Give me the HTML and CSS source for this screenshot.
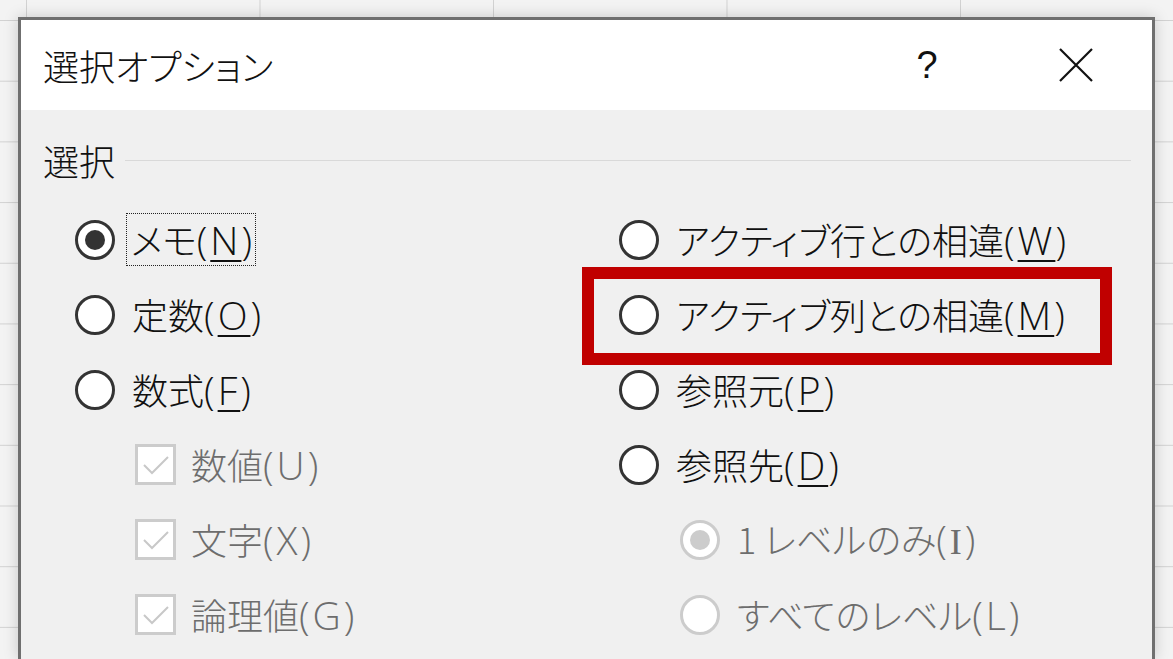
FILE: index.html
```html
<!DOCTYPE html>
<html lang="ja">
<head>
    <meta charset="UTF-8">
    <meta name="viewport" content="width=device-width, initial-scale=1.0">
    <title>選択オプション</title>
    <link rel="stylesheet" href="styles.css">
</head>
<body>

    <div id="dialogo">
        <div class="titulo">
            <span class="titulo-texto">選択オプション</span>
            <span class="btn-ajuda">?</span>
            <span class="btn-fechar">
                <svg width="34" height="34" viewBox="0 0 34 34">
                    <path d="M1 1 L33 33 M33 1 L1 33" stroke="#111" stroke-width="2.2" fill="none"/>
                </svg>
            </span>
        </div>

        <div class="corpo">
            <div class="grupo">
                <span class="grupo-nome">選択</span>
                <span class="grupo-linha"></span>
            </div>

            <div class="opcoes">
                <div class="coluna">
                    <div class="item"><span class="radio marcado"></span><span class="rotulo foco">メモ<span class="lat">(<u>N</u>)</span></span></div>
                    <div class="item"><span class="radio"></span><span class="rotulo">定数<span class="lat">(<u>O</u>)</span></span></div>
                    <div class="item"><span class="radio"></span><span class="rotulo">数式<span class="lat">(<u>F</u>)</span></span></div>
                    <div class="item sub-check"><span class="check"><svg width="28" height="22" viewBox="0 0 28 22"><path d="M2 11 L10 19 L26 3" stroke="#c8c8c8" stroke-width="2" fill="none"/></svg></span><span class="rotulo apagado">数値<span class="lat">(U)</span></span></div>
                    <div class="item sub-check"><span class="check"><svg width="28" height="22" viewBox="0 0 28 22"><path d="M2 11 L10 19 L26 3" stroke="#c8c8c8" stroke-width="2" fill="none"/></svg></span><span class="rotulo apagado">文字<span class="lat">(X)</span></span></div>
                    <div class="item sub-check"><span class="check"><svg width="28" height="22" viewBox="0 0 28 22"><path d="M2 11 L10 19 L26 3" stroke="#c8c8c8" stroke-width="2" fill="none"/></svg></span><span class="rotulo apagado">論理値<span class="lat">(G)</span></span></div>
                </div>

                <div class="coluna">
                    <div class="item"><span class="radio"></span><span class="rotulo">アクティブ行との相違<span class="lat">(<u>W</u>)</span></span></div>
                    <div class="item destaque"><span class="radio"></span><span class="rotulo">アクティブ列との相違<span class="lat">(<u>M</u>)</span></span></div>
                    <div class="item"><span class="radio"></span><span class="rotulo">参照元<span class="lat">(<u>P</u>)</span></span></div>
                    <div class="item"><span class="radio"></span><span class="rotulo">参照先<span class="lat">(<u>D</u>)</span></span></div>
                    <div class="item sub-radio"><span class="radio desativado marcado"></span><span class="rotulo apagado">1 レベルのみ<span class="lat">(<span class="serifa">I</span>)</span></span></div>
                    <div class="item sub-radio"><span class="radio desativado"></span><span class="rotulo apagado">すべてのレベル<span class="lat">(L)</span></span></div>
                </div>
            </div>
        </div>
    </div>

</body>
</html>
```

FILE: styles.css
```css
/* fundo: planilha do Excel */
body {
    margin: 0;
    padding: 0;
    height: 659px;
    overflow: hidden;
    font-family: "Noto Sans CJK JP", "Noto Sans", sans-serif;
    font-weight: 300;
    font-feature-settings: "palt";
    background-color: #f3f3f3;
    background-image:
        linear-gradient(to right, #d2d2d2 1px, transparent 1px),
        linear-gradient(to bottom, #d2d2d2 1px, transparent 1px);
    background-size: 233.5px 60.7px;
    background-position: 26px 20px;
}

#dialogo {
    position: absolute;
    left: 18px;
    top: 17px;
    width: 1131px;
    height: 639px;
    border: 3px solid #6f6f6f;
    border-bottom: none;
    background-color: #f0f0f0;
    box-shadow: 0 0 14px rgba(0, 0, 0, 0.18);
}

.titulo {
    display: flex;
    align-items: center;
    height: 90px;
    background-color: white;
    padding-left: 22px;
    color: #111;
}

.titulo-texto {
    flex: 1;
    font-size: 36px;
    line-height: 1;
}

.btn-ajuda {
    width: 100px;
    text-align: center;
    font-family: "Liberation Sans", sans-serif;
    font-size: 38px;
    line-height: 1;
}

.btn-fechar {
    width: 100px;
    margin-left: 49px;
    margin-right: 26px;
    display: flex;
    justify-content: center;
}

.corpo {
    padding: 30px 21px 0 22px;
}

.grupo {
    display: flex;
    align-items: center;
    height: 40px;
}

.grupo-nome {
    font-size: 36px;
    line-height: 1;
    color: #111;
    margin-right: 10px;
}

.grupo-linha {
    flex: 1;
    height: 1px;
    background-color: #d9d9d9;
}

.opcoes {
    display: flex;
    margin-top: 22px;
    padding-left: 32px;
}

.coluna {
    display: flex;
    flex-direction: column;
}

.coluna:first-child {
    width: 544px;
}

.coluna:last-child {
    flex: 1;
}

.item {
    display: flex;
    align-items: center;
    height: 75px;
    position: relative;
}

.rotulo {
    font-size: 36px;
    line-height: 1;
    color: #111;
    margin-left: 17px;
    white-space: nowrap;
}

/* letras latinas mais largas, como na fonte do Windows */
.lat {
    font-family: "Open Sans", "Noto Sans", sans-serif;
    font-size: 39px;
    letter-spacing: 3px;
}

.serifa {
    font-family: "Liberation Serif", serif;
    font-size: 36px;
}

.rotulo u {
    text-decoration-thickness: 2px;
    text-underline-offset: 5px;
}

.foco {
    outline: 1px dotted #222;
    margin-left: 12px;
    padding: 6px 0 6px 4px;
}

.apagado {
    color: #6d6d6d;
}

.radio {
    width: 34px;
    height: 34px;
    border: 3px solid #333;
    border-radius: 50%;
    background-color: white;
    display: flex;
    align-items: center;
    justify-content: center;
    flex-shrink: 0;
}

.radio.marcado::after {
    content: "";
    width: 20px;
    height: 20px;
    border-radius: 50%;
    background-color: #333;
}

.radio.desativado {
    border-color: #cccccc;
}

.radio.desativado.marcado::after {
    background-color: #cccccc;
}

.sub-check {
    padding-left: 60px;
}

.sub-check .rotulo {
    margin-left: 15px;
}

.check {
    width: 35px;
    height: 35px;
    border: 3px solid #cccccc;
    background-color: white;
    display: flex;
    align-items: center;
    justify-content: center;
}

.sub-radio {
    padding-left: 61px;
}

/* caixa vermelha de destaque */
.destaque::after {
    content: "";
    position: absolute;
    left: -37px;
    right: 19px;
    top: -10px;
    bottom: -13px;
    border: 12px solid #c00000;
}
```
